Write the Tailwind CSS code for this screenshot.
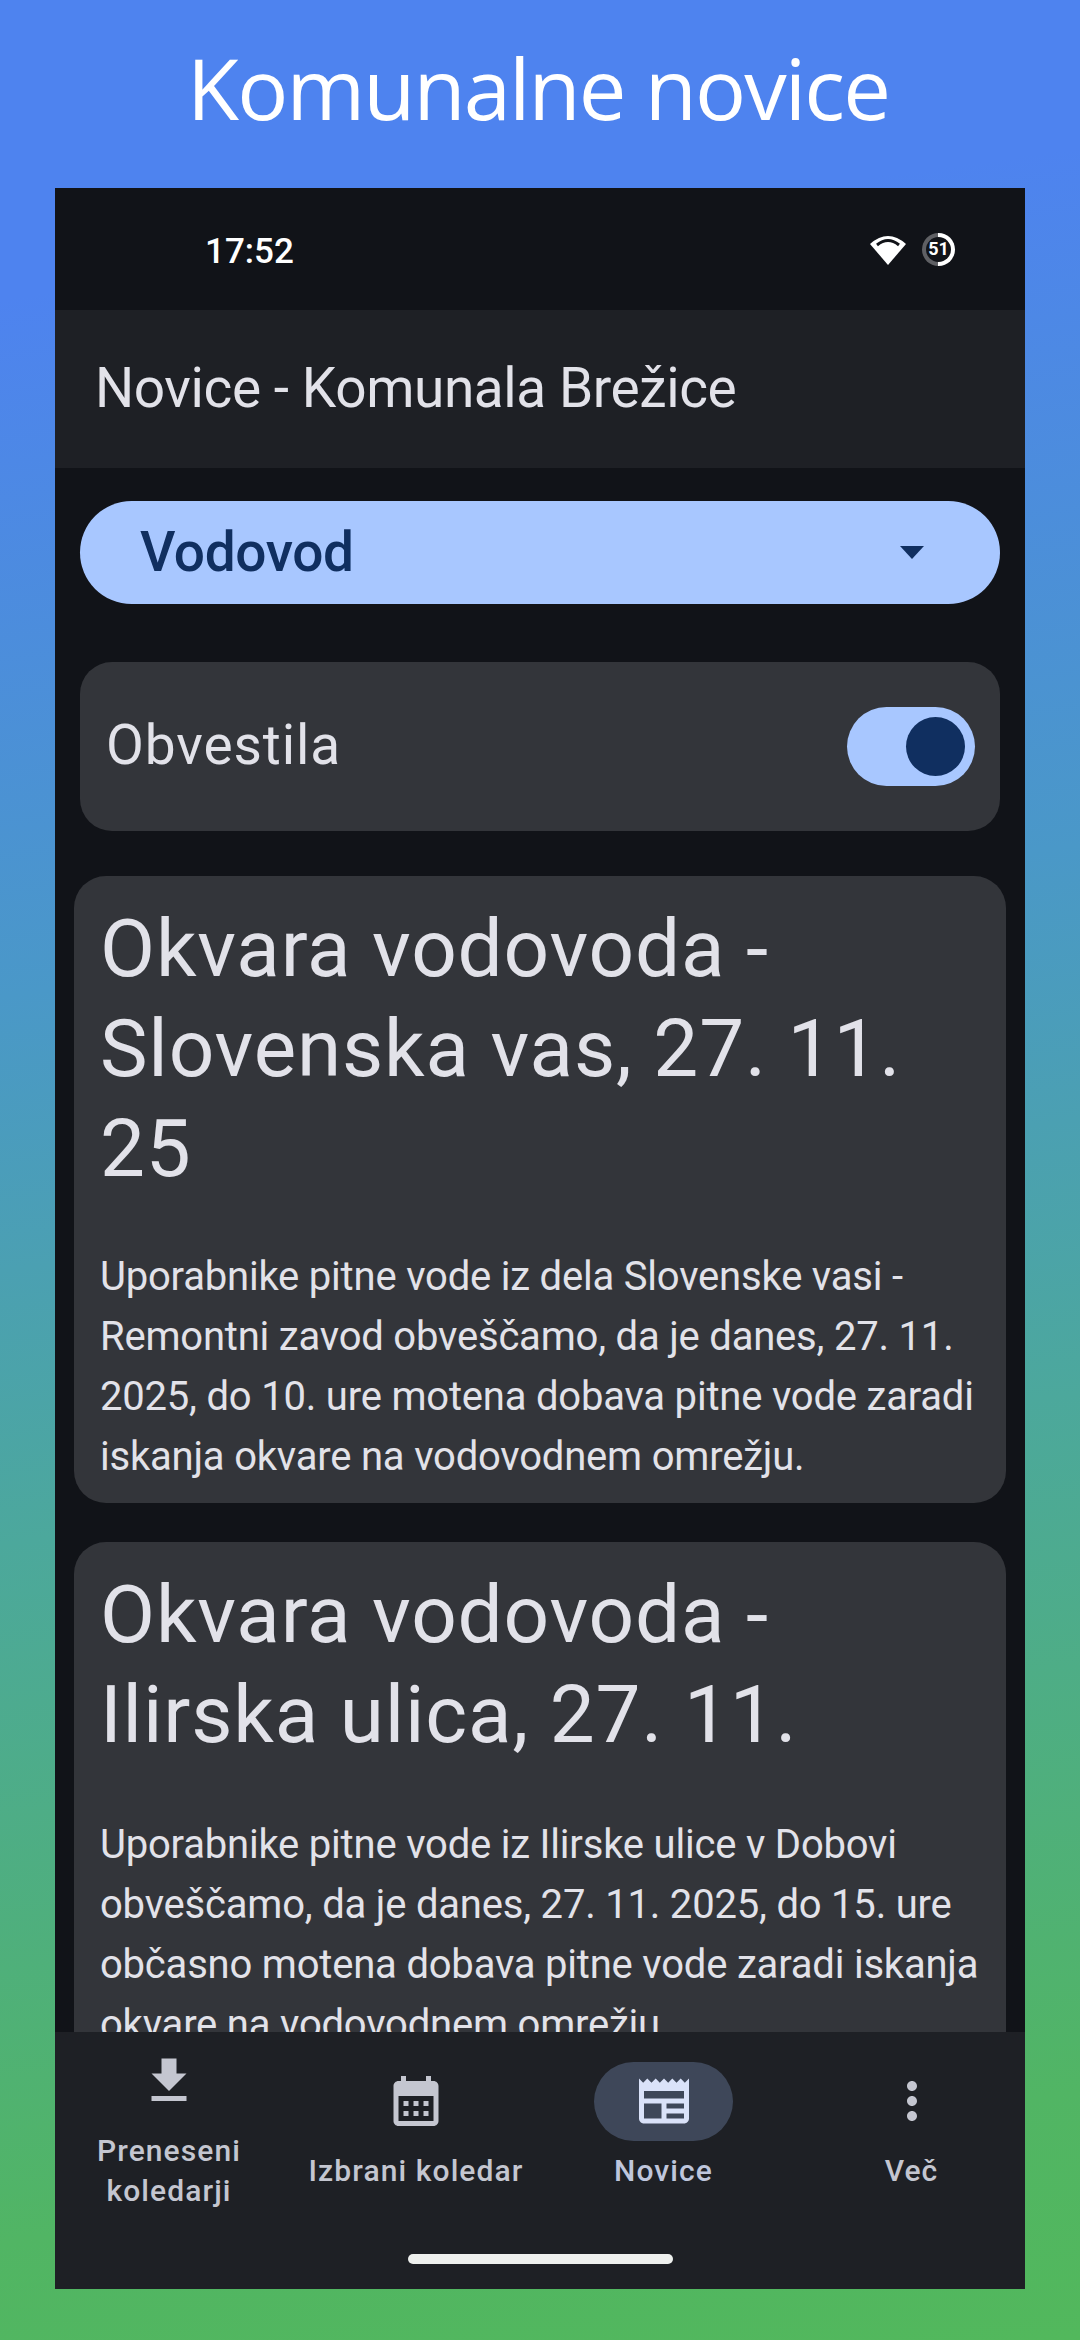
<!DOCTYPE html>
<html lang="sl">
<head>
    <meta charset="UTF-8">
    <meta name="viewport" content="width=device-width, initial-scale=1.0">
    <title>Komunalne novice</title>
    <script src="https://cdn.jsdelivr.net/npm/@tailwindcss/browser@4"></script>
</head>
<body class="m-0">
<div class="w-[1080px] h-[2340px] overflow-hidden flex flex-col items-center font-['Roboto',sans-serif] bg-[linear-gradient(172deg,#4e83ef_0%,#4e83ef_12%,#4a98c8_40%,#4ca89c_62%,#51b564_90%,#52b85c_100%)]">

    <!-- store headline -->
    <div class="h-[188px] w-full flex items-center justify-center pb-[14px]">
        <h1 class="font-['Open_Sans',sans-serif] text-[85px] leading-none font-normal text-white tracking-[-1.9px] pr-[4px]">Komunalne novice</h1>
    </div>

    <!-- phone -->
    <div class="w-[970px] h-[2101px] bg-[#111318] flex flex-col overflow-hidden">

        <div class="h-[122px] shrink-0 flex items-center justify-between pl-[150px] pr-[70px]">
            <span class="text-[35px] leading-none font-medium text-white pt-[4px]">17:52</span>
            <div class="flex items-center gap-[16px]">
                <svg width="36" height="32" viewBox="0 0 36 32"><path d="M18 32 L0 11 Q18 -5 36 11 Z" fill="#fff"/><path d="M7 12 Q18 3 29 12" fill="none" stroke="#111318" stroke-width="3"/></svg>
                <div class="relative w-[33px] h-[33px] rounded-full bg-[linear-gradient(90deg,#5f6064_50%,#ffffff_50%)] flex items-center justify-center">
                    <div class="w-[25px] h-[25px] rounded-full bg-[#111318] flex items-center justify-center text-[18px] leading-none font-bold text-white">51</div>
                </div>
            </div>
        </div>

        <div class="h-[158px] shrink-0 bg-[#1e2025] flex items-center pl-[40px]">
            <span class="text-[55px] leading-none text-[#e2e2e9] tracking-[-0.42px] pb-[2px]">Novice - Komunala Brežice</span>
        </div>

        <!-- scrolling content -->
        <div class="flex-1 min-h-0 overflow-hidden">
            <div class="mx-[25px] mt-[33px] h-[103px] rounded-full bg-[#a8c7ff] flex items-center justify-between pl-[60px] pr-[76px]">
                <span class="text-[55px] leading-none font-medium text-[#102f60] tracking-[-0.4px]">Vodovod</span>
                <svg width="24" height="13" viewBox="0 0 24 13"><path d="M0 0h24L12 13z" fill="#102f60"/></svg>
            </div>

            <div class="mx-[25px] mt-[58px] h-[169px] rounded-[32px] bg-[#33353a] flex items-center justify-between pl-[26px] pr-[25px]">
                <span class="text-[55px] leading-none text-[#e2e2e9] tracking-[0.9px] pb-[2px]">Obvestila</span>
                <div class="w-[128px] h-[79px] rounded-full bg-[#a8c7ff] flex items-center justify-end pr-[10px]">
                    <div class="w-[59px] h-[59px] rounded-full bg-[#102f60]"></div>
                </div>
            </div>

            <article class="mx-[19px] mt-[45px] rounded-[32px] bg-[#33353a] px-[26px] pt-[23px] pb-[16px] text-[#e2e2e9]">
                <h2 class="text-[80px] leading-[100px] font-normal tracking-[0.85px]">Okvara vodovoda - Slovenska vas, 27. 11. 25</h2>
                <p class="mt-[48px] text-[40px] leading-[60px] tracking-[-0.2px]">Uporabnike pitne vode iz dela Slovenske vasi - Remontni zavod obveščamo, da je danes, 27. 11. 2025, do 10. ure motena dobava pitne vode zaradi iskanja okvare na vodovodnem omrežju.</p>
            </article>

            <article class="mx-[19px] mt-[39px] rounded-[32px] bg-[#33353a] px-[26px] pt-[23px] pb-[16px] text-[#e2e2e9]">
                <h2 class="text-[80px] leading-[100px] font-normal tracking-[0.85px]">Okvara vodovoda - Ilirska ulica, 27. 11.</h2>
                <p class="mt-[50px] text-[40px] leading-[60px] tracking-[-0.2px]">Uporabnike pitne vode iz Ilirske ulice v Dobovi obveščamo, da je danes, 27. 11. 2025, do 15. ure občasno motena dobava pitne vode zaradi iskanja okvare na vodovodnem omrežju.</p>
            </article>
        </div>

        <!-- bottom nav -->
        <nav class="h-[257px] shrink-0 bg-[#1e2025] flex flex-col">
            <div class="h-[188px] grid grid-cols-[228px_266px_229px_247px] text-[30px] leading-[40px] font-medium tracking-[1.1px] text-[#c4c6d0] text-center">
                <div class="flex flex-col items-center justify-center gap-[10px]">
                    <div class="w-[139px] h-[79px] flex items-center justify-center">
                        <svg width="60" height="60" viewBox="0 0 24 24" fill="#c4c6d0"><path d="M19 9h-4V3H9v6H5l7 7 7-7zM5 18v2h14v-2H5z"/></svg>
                    </div>
                    <span>Preneseni<br>koledarji</span>
                </div>
                <div class="flex flex-col items-center justify-center gap-[10px]">
                    <div class="w-[139px] h-[79px] flex items-center justify-center">
                        <svg width="60" height="60" viewBox="0 0 24 24" fill="#c4c6d0"><path d="M19 4h-1V2h-2v2H8V2H6v2H5c-1.1 0-2 .9-2 2v14c0 1.1.9 2 2 2h14c1.1 0 2-.9 2-2V6c0-1.1-.9-2-2-2zm0 16H5V10h14v10zM9 14H7v-2h2v2zm4 0h-2v-2h2v2zm4 0h-2v-2h2v2zm-8 4H7v-2h2v2zm4 0h-2v-2h2v2zm4 0h-2v-2h2v2z"/></svg>
                    </div>
                    <span>Izbrani koledar</span>
                </div>
                <div class="flex flex-col items-center justify-center gap-[10px]">
                    <div class="w-[139px] h-[79px] rounded-full bg-[#3e4759] flex items-center justify-center">
                        <svg width="60" height="60" viewBox="0 0 24 24" fill="#dae2f9"><path d="M22 3l-1.67 1.67L18.67 3 17 4.67 15.33 3l-1.66 1.67L12 3l-1.67 1.67L8.67 3 7 4.67 5.33 3 3.67 4.67 2 3v16c0 1.1.9 2 2 2h16c1.1 0 2-.9 2-2V3zM11 19H4v-6h7v6zm9 0h-7v-2h7v2zm0-4h-7v-2h7v2zm0-4H4V8h16v3z"/></svg>
                    </div>
                    <span class="text-[#bfc6dc]">Novice</span>
                </div>
                <div class="pl-[20px] flex flex-col items-center justify-center gap-[10px]">
                    <div class="w-[139px] h-[79px] flex items-center justify-center">
                        <svg width="60" height="60" viewBox="0 0 24 24" fill="#c4c6d0"><path d="M12 8c1.1 0 2-.9 2-2s-.9-2-2-2-2 .9-2 2 .9 2 2 2zm0 2c-1.1 0-2 .9-2 2s.9 2 2 2 2-.9 2-2-.9-2-2-2zm0 6c-1.1 0-2 .9-2 2s.9 2 2 2 2-.9 2-2-.9-2-2-2z"/></svg>
                    </div>
                    <span>Več</span>
                </div>
            </div>
            <div class="flex justify-center pt-[34px]">
                <div class="w-[265px] h-[10px] rounded-full bg-[#eef0ee]"></div>
            </div>
        </nav>
    </div>
</div>
</body>
</html>
